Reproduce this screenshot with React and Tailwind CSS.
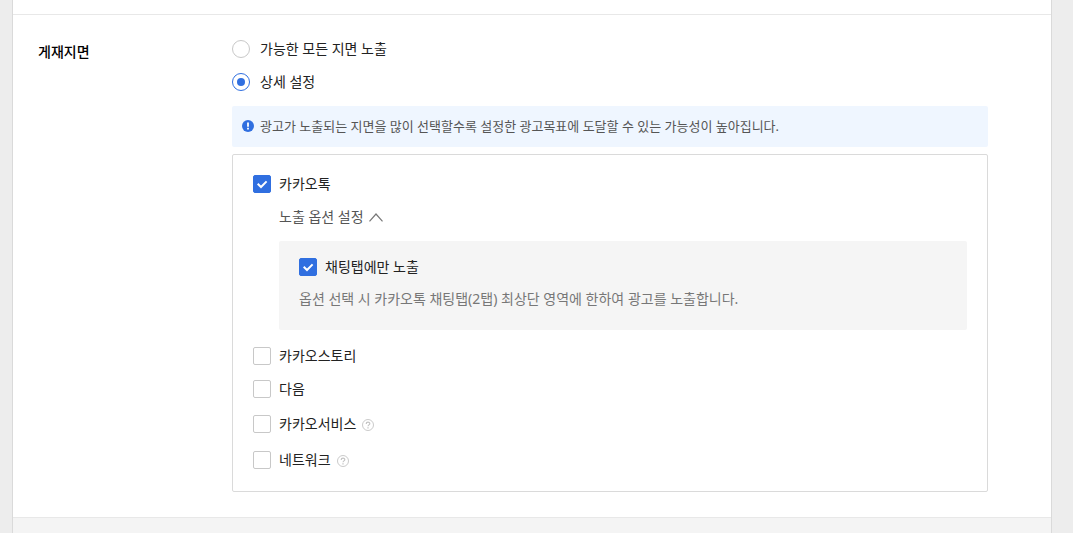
import { useState } from "react";

function RadioOption({ label, checked, onChange }) {
  return (
    <label className="flex w-fit cursor-pointer items-center gap-2.5 text-sm leading-[18px] text-[#222]">
      <input
        type="radio"
        name="placement"
        checked={checked}
        onChange={onChange}
        className="grid size-[18px] shrink-0 appearance-none place-items-center rounded-full border border-[#c8c8c8] bg-white before:size-2 before:rounded-full checked:border-[#306fe0] checked:before:bg-[#306fe0]"
      />
      {label}
    </label>
  );
}

function CheckOption({ label, checked, onChange }) {
  return (
    <label className="flex w-fit cursor-pointer items-center gap-2 text-sm leading-[18px] text-[#222]">
      <span className="grid shrink-0">
        <input
          type="checkbox"
          checked={checked}
          onChange={onChange}
          className="col-start-1 row-start-1 size-[18px] appearance-none rounded-xs border border-[#c8c8c8] bg-white checked:border-[#306fe0] checked:bg-[#306fe0]"
        />
        {checked && (
          <svg
            viewBox="0 0 18 18"
            className="pointer-events-none col-start-1 row-start-1 size-[18px]"
            fill="none"
            stroke="#fff"
            strokeWidth="2"
            aria-hidden="true"
          >
            <path d="M4.7 8.8 8 12l5.6-5.6" />
          </svg>
        )}
      </span>
      {label}
    </label>
  );
}

function HelpButton({ label }) {
  return (
    <button type="button" aria-label={label} className="mt-0.5 shrink-0 cursor-pointer">
      <svg viewBox="0 0 12 12" className="size-3" fill="none" stroke="#c4c4c4" aria-hidden="true">
        <circle cx="6" cy="6" r="5.5" strokeWidth="0.9" />
        <path d="M4.2 4.9c0-2.4 3.6-2.3 3.6-.2 0 1.2-1.8 1.2-1.8 2.6" strokeWidth="1.2" />
        <path d="M6 8.2v1.3" strokeWidth="1.3" />
      </svg>
    </button>
  );
}

export default function App() {
  const [mode, setMode] = useState("detail");
  const [open, setOpen] = useState(true);
  const [picked, setPicked] = useState({ talk: true, chat: true });
  const toggle = (key) => () => setPicked((p) => ({ ...p, [key]: !p[key] }));

  return (
    <div className="flex min-h-screen bg-[#ededed] pr-[21px] pl-3 font-['Noto_Sans','Noto_Sans_CJK_KR',sans-serif]">
      <main className="flex flex-1 flex-col border-x border-[#dadada] bg-[#f4f4f4]">
        <div className="h-3.5 bg-white" />
        <section className="flex items-start border-y border-[#e8e8e8] bg-white pt-[25px] pr-[63px] pb-[25px] pl-[25px]">
          <h2 className="mt-0.5 w-[194px] shrink-0 text-sm leading-5 font-medium text-black">게재지면</h2>

          <div className="min-w-0 flex-1">
            <div role="radiogroup" aria-label="게재지면" className="flex flex-col gap-[15px]">
              <RadioOption
                label="가능한 모든 지면 노출"
                checked={mode === "all"}
                onChange={() => setMode("all")}
              />
              <RadioOption
                label="상세 설정"
                checked={mode === "detail"}
                onChange={() => setMode("detail")}
              />
            </div>

            <p className="mt-[15px] flex items-center gap-1.5 rounded-xs bg-[#eff6ff] px-2.5 pt-2.5 pb-[11px] text-[13px] leading-5 text-[#555]">
              <svg viewBox="0 0 12 12" className="size-3 shrink-0" aria-hidden="true">
                <circle cx="6" cy="6" r="6" fill="#306fe0" />
                <path d="M6 2.4v4.4M6 7.8v1.8" stroke="#fff" strokeWidth="1.8" />
              </svg>
              광고가 노출되는 지면을 많이 선택할수록 설정한 광고목표에 도달할 수 있는 가능성이 높아집니다.
            </p>

            <div className="mt-[7px] rounded-xs border border-[#dadada] px-5 pt-5 pb-[22px]">
              <CheckOption label="카카오톡" checked={!!picked.talk} onChange={toggle("talk")} />

              <div className="mt-3.5 pl-[26px]">
                <button
                  type="button"
                  aria-expanded={open}
                  onClick={() => setOpen(!open)}
                  className="flex cursor-pointer items-center gap-[5px] text-sm leading-5 text-[#555]"
                >
                  노출 옵션 설정
                  <svg
                    viewBox="0 0 14 9"
                    className={open ? "h-[9px] w-3.5" : "h-[9px] w-3.5 rotate-180"}
                    fill="none"
                    stroke="#777"
                    strokeWidth="1.2"
                    aria-hidden="true"
                  >
                    <path d="M.5 8.3 7 1l6.5 7.3" />
                  </svg>
                </button>

                {open && (
                  <div className="mt-3.5 rounded-xs bg-[#f5f5f5] px-5 pt-[17px] pb-[21px]">
                    <CheckOption label="채팅탭에만 노출" checked={!!picked.chat} onChange={toggle("chat")} />
                    <p className="mt-[13px] text-sm leading-5 text-[#777]">
                      옵션 선택 시 카카오톡 채팅탭(2탭) 최상단 영역에 한하여 광고를 노출합니다.
                    </p>
                  </div>
                )}
              </div>

              <div className="mt-[17px] flex flex-col gap-[15px]">
                <CheckOption label="카카오스토리" checked={!!picked.story} onChange={toggle("story")} />
                <CheckOption label="다음" checked={!!picked.daum} onChange={toggle("daum")} />
              </div>
              <div className="mt-[17px] flex flex-col gap-[18px]">
                <div className="flex items-center gap-1.5">
                  <CheckOption label="카카오서비스" checked={!!picked.service} onChange={toggle("service")} />
                  <HelpButton label="카카오서비스 도움말" />
                </div>
                <div className="flex items-center gap-1.5">
                  <CheckOption label="네트워크" checked={!!picked.network} onChange={toggle("network")} />
                  <HelpButton label="네트워크 도움말" />
                </div>
              </div>
            </div>
          </div>
        </section>
      </main>
    </div>
  );
}
